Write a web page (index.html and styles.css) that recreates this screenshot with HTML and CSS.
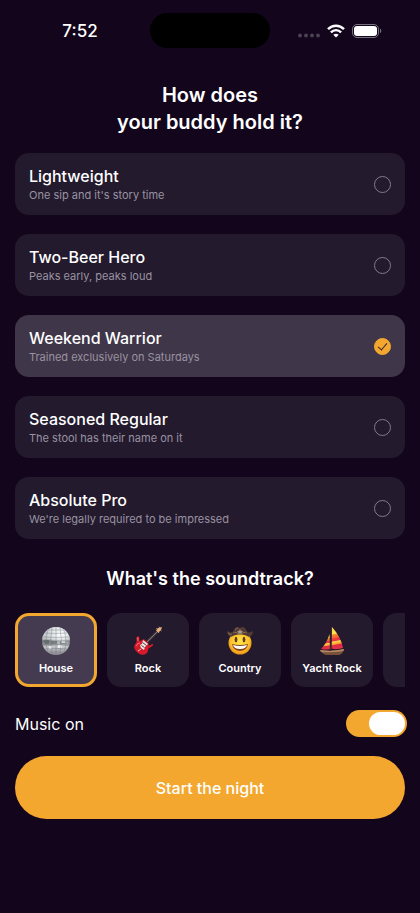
FILE: index.html
```html
<!DOCTYPE html>
<html lang="en">
<head>
    <meta charset="UTF-8">
    <meta name="viewport" content="width=device-width, initial-scale=1.0">
    <title>Start the night</title>
    <link rel="stylesheet" href="styles.css">
</head>
<body>
    <header class="status-bar">
        <span class="time">7:52</span>
        <span class="island"></span>
        <div class="status-icons">
            <svg width="22" height="16" viewBox="0 0 22 16" fill="#4b4254">
                <circle cx="2" cy="12.500" r="1.900"/>
                <circle cx="8" cy="12.500" r="1.900"/>
                <circle cx="14" cy="12.500" r="1.900"/>
                <circle cx="20" cy="12.500" r="1.900"/>
            </svg>
            <svg width="18" height="14" viewBox="0 0 18 14" fill="none" stroke="#fff" stroke-width="2.4">
                <path d="M1 5.2C5.5 .6 12.500 .6 17 5.200"/>
                <path d="M3.900 8.300C6.800 5.400 11.200 5.400 14.100 8.300"/>
                <path d="M9 13.500L6.300 10.800C7.800 9.300 10.200 9.300 11.700 10.800Z" fill="#fff" stroke="none"/>
            </svg>
            <svg width="30" height="14" viewBox="0 0 30 14">
                <rect x=".5" y=".5" width="26" height="13" rx="4.500" fill="none" stroke="#77707e"/>
                <rect x="2" y="2" width="23" height="10" rx="3" fill="#fff"/>
                <path d="M28 4.800C29.700 5.300 29.700 8.700 28 9.200Z" fill="#77707e"/>
            </svg>
        </div>
    </header>

    <main>
        <form>
            <h1>How does<br>your buddy hold it?</h1>
            <div class="levels">
                <label class="level">
                    <span class="level-text">
                        <span class="level-name">Lightweight</span>
                        <span class="level-detail">One sip and it's story time</span>
                    </span>
                    <input type="radio" name="level">
                </label>
                <label class="level">
                    <span class="level-text">
                        <span class="level-name">Two-Beer Hero</span>
                        <span class="level-detail">Peaks early, peaks loud</span>
                    </span>
                    <input type="radio" name="level">
                </label>
                <label class="level">
                    <span class="level-text">
                        <span class="level-name">Weekend Warrior</span>
                        <span class="level-detail">Trained exclusively on Saturdays</span>
                    </span>
                    <input type="radio" name="level" checked>
                </label>
                <label class="level">
                    <span class="level-text">
                        <span class="level-name">Seasoned Regular</span>
                        <span class="level-detail">The stool has their name on it</span>
                    </span>
                    <input type="radio" name="level">
                </label>
                <label class="level">
                    <span class="level-text">
                        <span class="level-name">Absolute Pro</span>
                        <span class="level-detail">We're legally required to be impressed</span>
                    </span>
                    <input type="radio" name="level">
                </label>
            </div>

            <h2>What's the soundtrack?</h2>
            <div class="genres">
                <label class="genre">
                    <input type="radio" name="genre" checked>
                    <svg width="30" height="30" viewBox="0 0 30 30">
                        <defs>
                            <linearGradient id="ball" x1="0" y1="0" x2="0" y2="1">
                                <stop offset="0" stop-color="#d5dcdf"/>
                                <stop offset=".42" stop-color="#c0c7c7"/>
                                <stop offset=".5" stop-color="#6d7271"/>
                                <stop offset=".62" stop-color="#8e9392"/>
                                <stop offset=".7" stop-color="#c3c5c7"/>
                                <stop offset="1" stop-color="#8d8993"/>
                            </linearGradient>
                            <radialGradient id="shine" cx=".65" cy=".28" r=".5">
                                <stop offset="0" stop-color="#fff"/>
                                <stop offset="1" stop-color="#fff" stop-opacity="0"/>
                            </radialGradient>
                        </defs>
                        <circle cx="15" cy="15" r="14" fill="url(#ball)"/>
                        <circle cx="15" cy="15" r="14" fill="url(#shine)"/>
                        <path d="M3 14h5v4H4zM10 15h6v3h-6zM19 15h5v3h-5z" fill="#525957" opacity=".5"/>
                        <path d="M20 15h4v2h-4zM17 19h4v3h-4zM8 20h3v3H8z" fill="#fff" opacity=".7"/>
                        <g fill="none" stroke="#68707a" stroke-width=".6" opacity=".65">
                            <path d="M15 1v28M7 4q-4 11 0 22M11 2q-3 13 0 26M19 2q3 13 0 26M23 4q4 11 0 22"/>
                            <path d="M7 4h16M4 7q11 1 22 0M2 11q13 1 26 0M1 15h28M2 19q13-1 26 0M4 23q11-1 22 0M8 26h14"/>
                        </g>
                    </svg>
                    <span>House</span>
                </label>
                <label class="genre">
                    <input type="radio" name="genre">
                    <svg width="30" height="30" viewBox="0 0 30 30">
                        <path d="M12 18L25 5" stroke="#40383d" stroke-width="2.600"/>
                        <path d="M12.500 17.500L25 5" stroke="#8a7472" stroke-width="1"/>
                        <path d="M23 4.500L25 2L29 1L28 4L25.500 6.500Z" fill="#eab07b"/>
                        <path d="M23.500 2.200l1 1M26 .8l.8 1M28.500 4.800l-1-.6M26 7l-.8-1" stroke="#c5a68d" stroke-width="1"/>
                        <path d="M4 11C6 9 7 12 6 14C6 16 9 14 11 13L16 18C14 20 16 20 19 18C21 18 20 20 18 21C15 22 15 23 15 25C14 29 9 30 5 27C1 24 0 20 3 17C5 15 2 13 4 11Z" fill="#d71929"/>
                        <path d="M4 12C5 11 5 13 5 15M3 20C4 18 6 17 7 17" fill="none" stroke="#ff777a" stroke-width="1"/>
                        <path d="M10 14L15 18L12 21L11 24L8 22L7 19L9 18Z" fill="#eee9e5"/>
                        <path d="M9.500 16.500l4 3M8.500 19.500l3 2" stroke="#4e3b3d" stroke-width="1"/>
                        <path d="M5 25l3-2" stroke="#ccc" stroke-width="1"/>
                    </svg>
                    <span>Rock</span>
                </label>
                <label class="genre">
                    <input type="radio" name="genre">
                    <svg width="30" height="30" viewBox="0 0 30 30">
                        <defs>
                            <radialGradient id="face" cx=".5" cy=".45" r=".55">
                                <stop offset="0" stop-color="#ffe64a"/>
                                <stop offset=".7" stop-color="#ffc52b"/>
                                <stop offset="1" stop-color="#e98b17"/>
                            </radialGradient>
                        </defs>
                        <circle cx="15" cy="17" r="11.500" fill="url(#face)"/>
                        <path d="M2 5C4 6 6 7 8 6C9 3 10 1 13 1C14 2 16 2 17 1C20 1 21 3 22 6C24 7 26 6 28 5C28 9 25 12 22 10C18 8 12 8 8 10C5 12 2 9 2 5Z" fill="#513b32"/>
                        <path d="M8 6Q15 9 22 6M10 4Q11 2 13 2M3 7Q5 9 7 8" fill="none" stroke="#8b6855" stroke-width="1"/>
                        <path d="M15 3l1 2l2 0l-1.500 1.500l.5 1.500l-2-1l-2 1l.5-1.500L12 5l2 0z" fill="#a8978e"/>
                        <ellipse cx="11" cy="13.500" rx="1.400" ry="2.700" fill="#6b3819"/>
                        <ellipse cx="19" cy="13.500" rx="1.400" ry="2.700" fill="#6b3819"/>
                        <path d="M7 18Q15 20 23 18Q22 25 15 25Q8 25 7 18Z" fill="#8c471c"/>
                        <path d="M8 19Q15 21 22 19Q21 23 15 23Q9 23 8 19Z" fill="#fff"/>
                    </svg>
                    <span>Country</span>
                </label>
                <label class="genre">
                    <input type="radio" name="genre">
                    <svg width="30" height="30" viewBox="0 0 30 30">
                        <defs>
                            <linearGradient id="sail" x1="0" y1="0" x2=".1" y2="1">
                                <stop offset="0" stop-color="#ffc93a"/>
                                <stop offset=".32" stop-color="#ffe650"/>
                                <stop offset=".36" stop-color="#f98a2e"/>
                                <stop offset=".5" stop-color="#f7622f"/>
                                <stop offset=".54" stop-color="#ee3b3c"/>
                                <stop offset=".64" stop-color="#e83541"/>
                                <stop offset=".68" stop-color="#ffd848"/>
                                <stop offset=".8" stop-color="#ff9a30"/>
                                <stop offset=".84" stop-color="#e02f45"/>
                            </linearGradient>
                        </defs>
                        <path d="M3 24Q15 26 27 23Q26 28 22 29H9Q5 28 3 24Z" fill="#77503a"/>
                        <path d="M3 24Q15 26 27 23L26.500 25Q15 27 4 26Z" fill="#b58a61"/>
                        <path d="M12.500 8Q10 17 4 23Q8 24 13 23Z" fill="url(#sail)"/>
                        <path d="M15 1Q24 11 26 22Q20 24 14.500 22.500Z" fill="url(#sail)"/>
                        <path d="M14.500 1Q14.500 12 13.500 25" fill="none" stroke="#4b292c" stroke-width="1"/>
                    </svg>
                    <span>Yacht Rock</span>
                </label>
                <label class="genre">
                    <input type="radio" name="genre" aria-label="More">
                </label>
            </div>

            <div class="music">
                <label for="music-switch">Music on</label>
                <input type="checkbox" class="switch" id="music-switch" checked>
            </div>
            <button type="button" class="start">Start the night</button>
        </form>
    </main>
</body>
</html>
```
FILE: styles.css
```css
:root {
    --bg: #13061c;
    --card: #231a2e;
    --card-active: #403649;
    --accent: #f3a72f;
    --muted: #9992a0;
}

* {
    margin: 0;
    padding: 0;
    box-sizing: border-box;
}

body {
    min-height: 100vh;
    background-color: var(--bg);
    color: #fff;
    font-family: Inter, sans-serif;
}

.status-bar {
    display: grid;
    grid-template-columns: 1fr 120px 1fr;
    align-items: center;
    padding-top: 13px;
}

.time {
    padding-left: 10px;
    text-align: center;
    font-size: 17px;
    font-weight: 500;
}

.island {
    height: 35px;
    border-radius: 18px;
    background-color: #000;
}

.status-icons {
    display: flex;
    align-items: center;
    justify-content: center;
    gap: 7px;
    padding-right: 10px;
}

main {
    padding: 34px 15px;
}

h1,
h2 {
    text-align: center;
    font-weight: 600;
}

h1 {
    font-size: 20px;
    line-height: 27px;
}

h2 {
    margin: 28px 0 22px;
    font-size: 18px;
    line-height: 24px;
}

input {
    appearance: none;
    cursor: pointer;
}

.levels {
    display: flex;
    flex-direction: column;
    gap: 19px;
    margin-top: 17px;
}

.level {
    display: flex;
    align-items: center;
    justify-content: space-between;
    padding: 12px 14px;
    border-radius: 14px;
    background-color: var(--card);
    cursor: pointer;
}

.level:has(input:checked) {
    background-color: var(--card-active);
}

.level-name,
.level-detail {
    display: block;
}

.level-name {
    font-size: 16px;
    font-weight: 500;
    line-height: 22px;
}

.level-detail {
    color: var(--muted);
    font-size: 11px;
    line-height: 16px;
}

.level input {
    display: grid;
    place-items: center;
    width: 17px;
    height: 17px;
    border: 1px solid #837b8b;
    border-radius: 50%;
}

.level input:checked {
    border-color: var(--accent);
    background-color: var(--accent);
}

.level input:checked::after {
    content: '';
    width: 4px;
    height: 8px;
    margin-bottom: 2px;
    border: solid #352431;
    border-width: 0 1px 1px 0;
    transform: rotate(40deg);
}

.genres {
    display: flex;
    gap: 10px;
    overflow: hidden;
}

.genre {
    display: flex;
    flex: 0 0 82px;
    flex-direction: column;
    align-items: center;
    gap: 4px;
    height: 74px;
    padding-top: 6px;
    border: 3px solid transparent;
    border-radius: 14px;
    background: var(--card) border-box;
    font-size: 11px;
    font-weight: 600;
    line-height: 16px;
    white-space: nowrap;
    cursor: pointer;
}

.genre:has(input:checked) {
    border-color: var(--accent);
    background-color: #453b50;
}

.music {
    display: flex;
    align-items: center;
    justify-content: space-between;
    margin: 23px -2px 19px 0;
    font-size: 16px;
}

.switch {
    display: flex;
    width: 61px;
    height: 27px;
    padding: 2px;
    border-radius: 14px;
    background-color: #453b50;
}

.switch::after {
    content: '';
    width: 36px;
    border-radius: 12px;
    background-color: #fff;
}

.switch:checked {
    justify-content: flex-end;
    background-color: var(--accent);
}

.start {
    width: 100%;
    height: 63px;
    border: none;
    border-radius: 32px;
    background-color: var(--accent);
    color: #fff;
    font-family: inherit;
    font-size: 16px;
    font-weight: 500;
    cursor: pointer;
}
```
